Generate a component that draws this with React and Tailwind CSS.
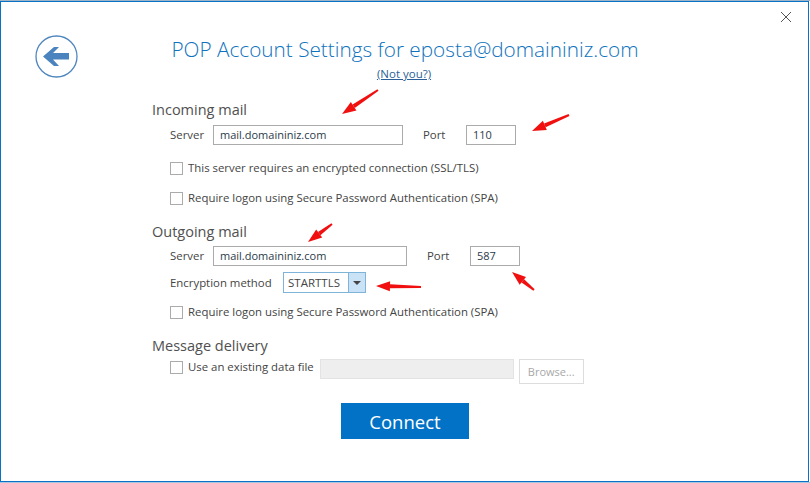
import React from "react";

const font = "font-['Open_Sans','Noto_Sans',sans-serif]";
const inputBox = "h-5 border border-[#ababab] bg-white pl-[6px] text-[11px] leading-[18px] text-[#2b3a4a]";
const sectionTitle = "text-[14.5px] leading-5 text-[#505050]";
const label = "text-[11.4px] leading-5 text-[#444444] whitespace-nowrap";

function Check({ text, className = "" }) {
    return (
        <div className={`flex items-center gap-[5px] ${className}`}>
            <span className="w-[13px] h-[13px] border border-[#ababab] bg-white" />
            <span className={label}>{text}</span>
        </div>
    );
}

function Arrow({ x1, y1, x2, y2 }) {
    // the shaft runs from (x1,y1) and ends in the head at (x2,y2)
    const dx = x2 - x1;
    const dy = y2 - y1;
    const len = Math.hypot(dx, dy);
    const ux = dx / len;
    const uy = dy / len;
    const bx = x2 - ux * 14;
    const by = y2 - uy * 14;
    return (
        <g fill="#f01010" stroke="none">
            <polygon points={`${x1 - uy},${y1 + ux} ${x1 + uy},${y1 - ux} ${bx + uy * 2},${by - ux * 2} ${bx - uy * 2},${by + ux * 2}`} />
            <polygon points={`${x2},${y2} ${bx + uy * 5},${by - ux * 5} ${bx - uy * 5},${by + ux * 5}`} />
        </g>
    );
}

export default function App() {
    return (
        <div className={`relative w-[810px] h-[483px] bg-white overflow-hidden ${font}`}>
            <div className="h-px bg-[#9fb4c6]" />
            <div className="w-[809px] h-[481px] border border-[#0a72c4] bg-white relative">
                <button className="absolute right-[16px] top-[9px] text-[#555555]">
                    <svg width="12" height="12" viewBox="0 0 12 12" fill="none" stroke="#555555" strokeWidth="1">
                        <path d="M1 1l10 10M11 1L1 11" />
                    </svg>
                </button>

                <div className="flex h-[64px]">
                    <div className="w-[34px]" />
                    <svg className="mt-[33px]" width="43" height="43" viewBox="0 0 43 43">
                        <circle cx="21.5" cy="21.5" r="20.5" fill="none" stroke="#4f86bd" strokeWidth="1.3" />
                        <path d="M8 21.5 L19 12 H24 L18 18 H34 V24.5 H18 L24 31 H19 Z" fill="#4a83bd" />
                    </svg>
                    <div className="ml-[17px] w-[620px] pt-[32px] text-center text-[20.75px] font-light leading-[30px] text-[#0f72bc] whitespace-nowrap">
                        POP Account Settings for eposta@domaininiz.com
                    </div>
                </div>
                <div className="h-[20px] w-[806px] text-center text-[11.5px] leading-4 text-[#2b5f97] underline">(Not you?)</div>

                <div className="ml-[151px] mt-[14px]">
                    <div className={sectionTitle}>Incoming mail</div>
                    <div className="flex items-center mt-[5px] ml-[18px]">
                        <span className={`${label} w-[43px]`}>Server</span>
                        <div className={`${inputBox} w-[190px]`}>mail.domaininiz.com</div>
                        <span className={`${label} ml-[20px] w-[43px]`}>Port</span>
                        <div className={`${inputBox} w-[50px]`}>110</div>
                    </div>
                    <Check text="This server requires an encrypted connection (SSL/TLS)" className="ml-[18px] mt-[13px]" />
                    <Check text="Require logon using Secure Password Authentication (SPA)" className="ml-[18px] mt-[10px]" />

                    <div className={`${sectionTitle} mt-[14px]`}>Outgoing mail</div>
                    <div className="flex items-center mt-[4px] ml-[18px]">
                        <span className={`${label} w-[43px]`}>Server</span>
                        <div className={`${inputBox} w-[194px]`}>mail.domaininiz.com</div>
                        <span className={`${label} ml-[20px] w-[43px]`}>Port</span>
                        <div className={`${inputBox} w-[50px]`}>587</div>
                    </div>
                    <div className="flex items-center mt-[6px] ml-[18px]">
                        <span className={`${label} w-[113px]`}>Encryption method</span>
                        <div className="flex w-[83px] h-[21px] border border-[#7eb4d9] bg-white">
                            <span className="flex-1 pl-[4px] text-[11.5px] leading-[19px] text-[#444444]">STARTTLS</span>
                            <span className="w-[17px] bg-[#c9e2f6] border-l border-[#7eb4d9] flex items-center justify-center">
                                <span className="border-x-[4px] border-x-transparent border-t-[4px] border-t-[#444444]" />
                            </span>
                        </div>
                    </div>
                    <Check text="Require logon using Secure Password Authentication (SPA)" className="ml-[18px] mt-[9px]" />

                    <div className={`${sectionTitle} mt-[14px]`}>Message delivery</div>
                    <div className="flex items-start ml-[18px] mt-[1px]">
                        <Check text="Use an existing data file" />
                        <div className="ml-[6px] mt-[2px] w-[194px] h-5 bg-[#eeeeee] border border-[#e3e3e3]" />
                        <div className="ml-[5px] mt-[2px] w-[65px] h-[25px] border border-[#dddddd] text-center text-[11px] leading-[23px] text-[#a8a8a8]">Browse...</div>
                    </div>
                </div>

                <div className="flex justify-center mt-[19px] pl-px">
                    <div className="w-[128px] h-[36px] bg-[#0272c6] text-center text-white text-[18.5px] leading-[38px]">Connect</div>
                </div>
            </div>
            <div className="h-px bg-[#a8c6e0]" />

            <svg className="absolute left-0 top-0 pointer-events-none" width="810" height="483">
                <Arrow x1={378} y1={90} x2={342} y2={114} />
                <Arrow x1={569} y1={115} x2={532} y2={131} />
                <Arrow x1={332} y1={224} x2={308} y2={242} />
                <Arrow x1={534} y1={290} x2={512} y2={272} />
                <Arrow x1={421} y1={287} x2={376} y2={286} />
            </svg>
        </div>
    );
}
